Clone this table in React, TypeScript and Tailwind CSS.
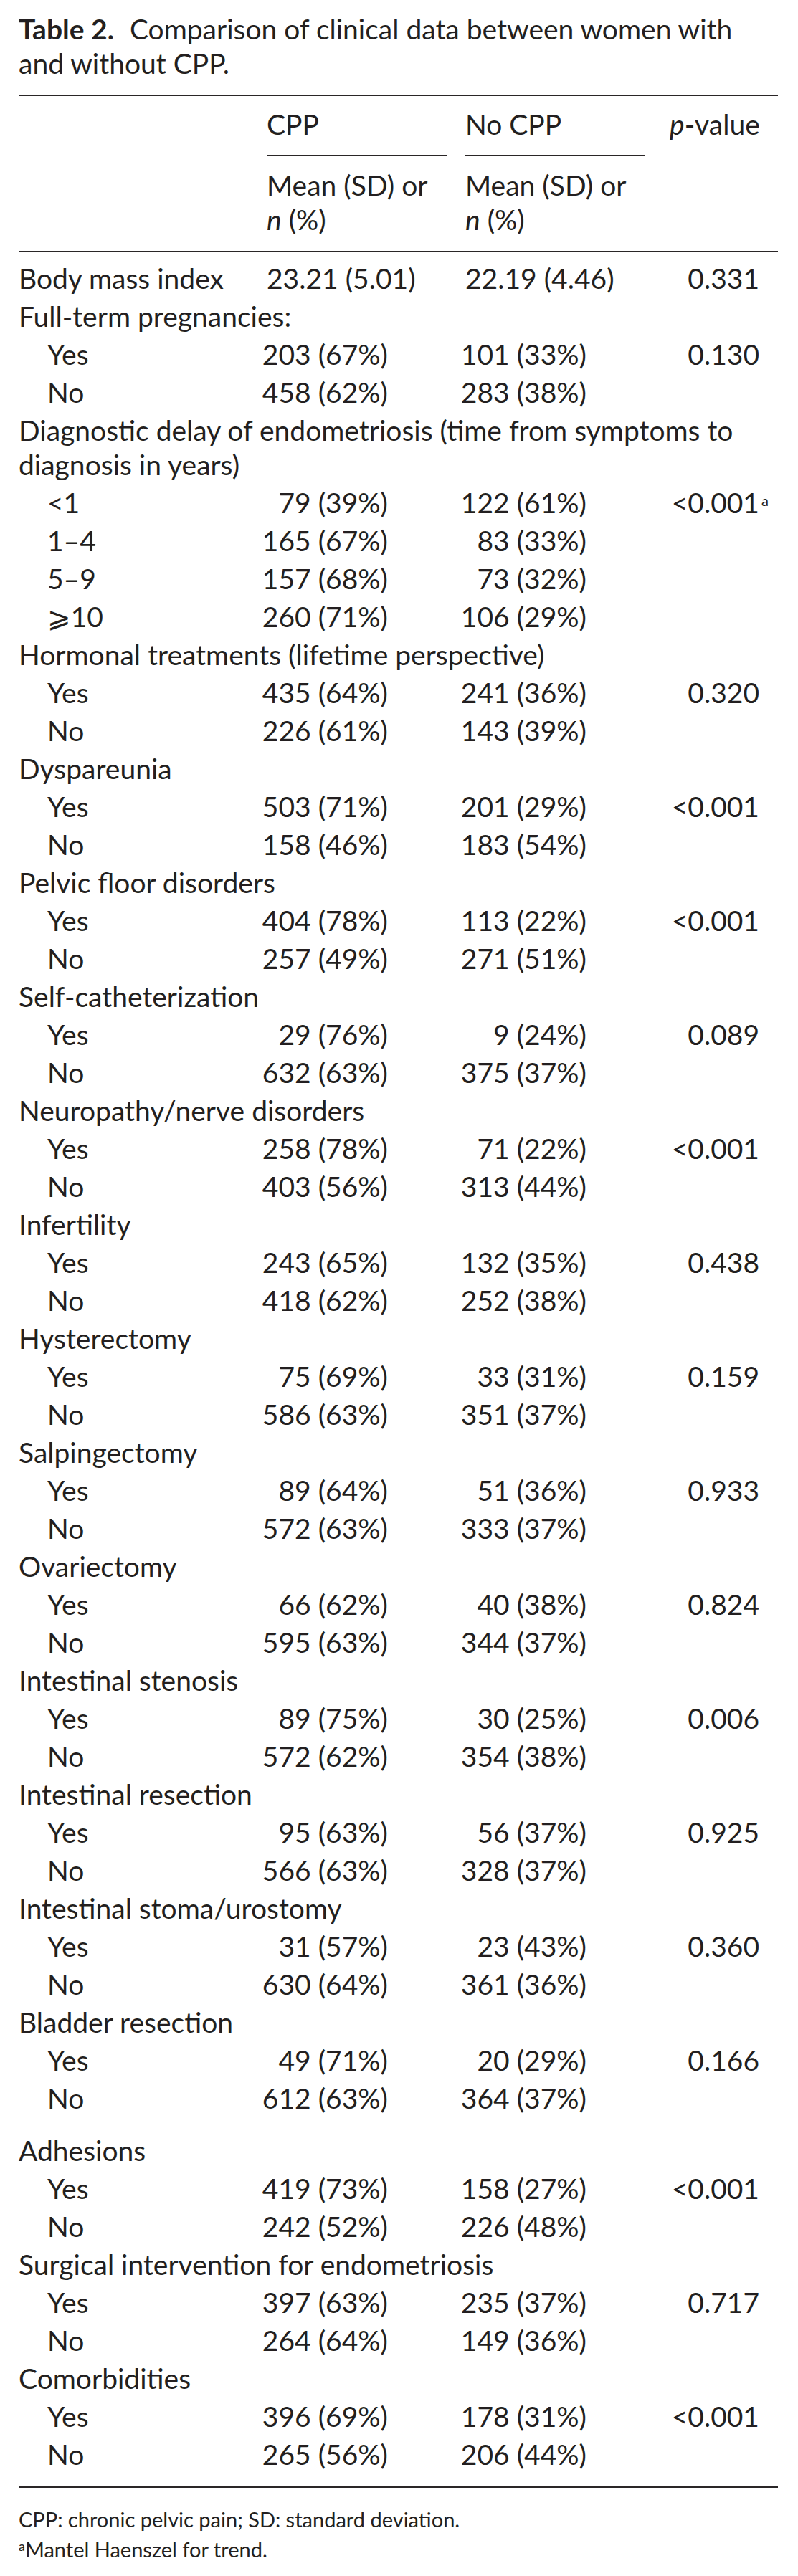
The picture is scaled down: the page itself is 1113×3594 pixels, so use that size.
import React from "react";

type Row =
  | { kind: "group"; label: React.ReactNode; gap?: boolean }
  | {
      kind: "data";
      label: string;
      sub?: boolean;
      cpp: string;
      nocpp: string;
      p?: string;
      sup?: boolean;
      mean?: boolean;
    };

const rows: Row[] = [
  { kind: "data", label: "Body mass index", cpp: "23.21 (5.01)", nocpp: "22.19 (4.46)", p: "0.331", mean: true },
  { kind: "group", label: "Full-term pregnancies:" },
  { kind: "data", label: "Yes", sub: true, cpp: "203 (67%)", nocpp: "101 (33%)", p: "0.130" },
  { kind: "data", label: "No", sub: true, cpp: "458 (62%)", nocpp: "283 (38%)" },
  {
    kind: "group",
    label: (
      <>
        Diagnostic delay of endometriosis (time from symptoms to
        <br />
        diagnosis in years)
      </>
    ),
  },
  { kind: "data", label: "<1", sub: true, cpp: "79 (39%)", nocpp: "122 (61%)", p: "<0.001", sup: true },
  { kind: "data", label: "1–4", sub: true, cpp: "165 (67%)", nocpp: "83 (33%)" },
  { kind: "data", label: "5–9", sub: true, cpp: "157 (68%)", nocpp: "73 (32%)" },
  { kind: "data", label: "⩾10", sub: true, cpp: "260 (71%)", nocpp: "106 (29%)" },
  { kind: "group", label: "Hormonal treatments (lifetime perspective)" },
  { kind: "data", label: "Yes", sub: true, cpp: "435 (64%)", nocpp: "241 (36%)", p: "0.320" },
  { kind: "data", label: "No", sub: true, cpp: "226 (61%)", nocpp: "143 (39%)" },
  { kind: "group", label: "Dyspareunia" },
  { kind: "data", label: "Yes", sub: true, cpp: "503 (71%)", nocpp: "201 (29%)", p: "<0.001" },
  { kind: "data", label: "No", sub: true, cpp: "158 (46%)", nocpp: "183 (54%)" },
  { kind: "group", label: "Pelvic floor disorders" },
  { kind: "data", label: "Yes", sub: true, cpp: "404 (78%)", nocpp: "113 (22%)", p: "<0.001" },
  { kind: "data", label: "No", sub: true, cpp: "257 (49%)", nocpp: "271 (51%)" },
  { kind: "group", label: "Self-catheterization" },
  { kind: "data", label: "Yes", sub: true, cpp: "29 (76%)", nocpp: "9 (24%)", p: "0.089" },
  { kind: "data", label: "No", sub: true, cpp: "632 (63%)", nocpp: "375 (37%)" },
  { kind: "group", label: "Neuropathy/nerve disorders" },
  { kind: "data", label: "Yes", sub: true, cpp: "258 (78%)", nocpp: "71 (22%)", p: "<0.001" },
  { kind: "data", label: "No", sub: true, cpp: "403 (56%)", nocpp: "313 (44%)" },
  { kind: "group", label: "Infertility" },
  { kind: "data", label: "Yes", sub: true, cpp: "243 (65%)", nocpp: "132 (35%)", p: "0.438" },
  { kind: "data", label: "No", sub: true, cpp: "418 (62%)", nocpp: "252 (38%)" },
  { kind: "group", label: "Hysterectomy" },
  { kind: "data", label: "Yes", sub: true, cpp: "75 (69%)", nocpp: "33 (31%)", p: "0.159" },
  { kind: "data", label: "No", sub: true, cpp: "586 (63%)", nocpp: "351 (37%)" },
  { kind: "group", label: "Salpingectomy" },
  { kind: "data", label: "Yes", sub: true, cpp: "89 (64%)", nocpp: "51 (36%)", p: "0.933" },
  { kind: "data", label: "No", sub: true, cpp: "572 (63%)", nocpp: "333 (37%)" },
  { kind: "group", label: "Ovariectomy" },
  { kind: "data", label: "Yes", sub: true, cpp: "66 (62%)", nocpp: "40 (38%)", p: "0.824" },
  { kind: "data", label: "No", sub: true, cpp: "595 (63%)", nocpp: "344 (37%)" },
  { kind: "group", label: "Intestinal stenosis" },
  { kind: "data", label: "Yes", sub: true, cpp: "89 (75%)", nocpp: "30 (25%)", p: "0.006" },
  { kind: "data", label: "No", sub: true, cpp: "572 (62%)", nocpp: "354 (38%)" },
  { kind: "group", label: "Intestinal resection" },
  { kind: "data", label: "Yes", sub: true, cpp: "95 (63%)", nocpp: "56 (37%)", p: "0.925" },
  { kind: "data", label: "No", sub: true, cpp: "566 (63%)", nocpp: "328 (37%)" },
  { kind: "group", label: "Intestinal stoma/urostomy" },
  { kind: "data", label: "Yes", sub: true, cpp: "31 (57%)", nocpp: "23 (43%)", p: "0.360" },
  { kind: "data", label: "No", sub: true, cpp: "630 (64%)", nocpp: "361 (36%)" },
  { kind: "group", label: "Bladder resection" },
  { kind: "data", label: "Yes", sub: true, cpp: "49 (71%)", nocpp: "20 (29%)", p: "0.166" },
  { kind: "data", label: "No", sub: true, cpp: "612 (63%)", nocpp: "364 (37%)" },
  { kind: "group", label: "Adhesions", gap: true },
  { kind: "data", label: "Yes", sub: true, cpp: "419 (73%)", nocpp: "158 (27%)", p: "<0.001" },
  { kind: "data", label: "No", sub: true, cpp: "242 (52%)", nocpp: "226 (48%)" },
  { kind: "group", label: "Surgical intervention for endometriosis" },
  { kind: "data", label: "Yes", sub: true, cpp: "397 (63%)", nocpp: "235 (37%)", p: "0.717" },
  { kind: "data", label: "No", sub: true, cpp: "264 (64%)", nocpp: "149 (36%)" },
  { kind: "group", label: "Comorbidities" },
  { kind: "data", label: "Yes", sub: true, cpp: "396 (69%)", nocpp: "178 (31%)", p: "<0.001" },
  { kind: "data", label: "No", sub: true, cpp: "265 (56%)", nocpp: "206 (44%)" },
];

function TableRow({ row }: { row: Row }) {
  if (row.kind === "group") {
    return (
      <div
        className={
          "grid grid-cols-[322px_277px_277px_183px] pb-[2.5px] " +
          (row.gap ? "pt-[22.5px]" : "pt-[2.5px]")
        }
      >
        <div className="col-span-4 whitespace-nowrap">{row.label}</div>
      </div>
    );
  }
  return (
    <div className="grid grid-cols-[322px_277px_277px_183px] py-[2.5px]">
      <div className={"whitespace-nowrap " + (row.sub ? "pl-[40px]" : "")}>{row.label}</div>
      <div className={row.mean ? "pl-[24px] whitespace-nowrap" : "pr-[84px] text-right whitespace-nowrap"}>
        {row.cpp}
      </div>
      <div className={row.mean ? "pl-[24px] whitespace-nowrap" : "pr-[84px] text-right whitespace-nowrap"}>
        {row.nocpp}
      </div>
      <div className="pr-[26px] text-right whitespace-nowrap">
        {row.p ? (
          <span className="relative">
            {row.p}
            {row.sup ? (
              <span className="absolute left-full top-[10px] ml-[3px] text-[20px] leading-none">a</span>
            ) : null}
          </span>
        ) : null}
      </div>
    </div>
  );
}

export default function App() {
  return (
    <div className="min-h-screen bg-white text-[#231f20] font-['Lato','DejaVu_Sans',sans-serif]">
      <div className="px-[26px] pt-[16px] pb-[17px] w-[1111px]">
        <p className="text-[39px] leading-[48px] whitespace-nowrap">
          <span className="font-bold">Table 2.</span>
          <span className="ml-[22px]">Comparison of clinical data between women with</span>
          <br />
          and without CPP.
        </p>

        <div className="mt-[20px] text-[39px] leading-[48px]">
          <div className="grid grid-cols-[322px_277px_277px_183px] border-t-2 border-b-2 border-[#2a2627]">
            <div className="row-span-2" />
            <div className="pl-[24px] pt-[15px]">
              <div className="border-b-2 border-[#2a2627] pb-[19px] mr-[2px]">CPP</div>
            </div>
            <div className="pl-[24px] pt-[15px]">
              <div className="border-b-2 border-[#2a2627] pb-[19px] mr-[2px]">No CPP</div>
            </div>
            <div className="row-span-2 pl-[32px] pt-[15px] whitespace-nowrap">
              <i>p</i>-value
            </div>
            <div className="pl-[24px] pt-[16px] pb-[20px] whitespace-nowrap">
              Mean (SD) or
              <br />
              <i>n</i> (%)
            </div>
            <div className="pl-[24px] pt-[16px] pb-[20px] whitespace-nowrap">
              Mean (SD) or
              <br />
              <i>n</i> (%)
            </div>
          </div>

          <div className="pt-[9.5px] pb-[18px] border-b-2 border-[#2a2627]">
            {rows.map((r, i) => (
              <TableRow key={i} row={r} />
            ))}
          </div>
        </div>

        <div className="mt-[23px] text-[29px] leading-[42px]">
          <p>CPP: chronic pelvic pain; SD: standard deviation.</p>
          <p>
            <span className="relative -top-[9px] text-[18px]">a</span>Mantel Haenszel for trend.
          </p>
        </div>
      </div>
    </div>
  );
}
